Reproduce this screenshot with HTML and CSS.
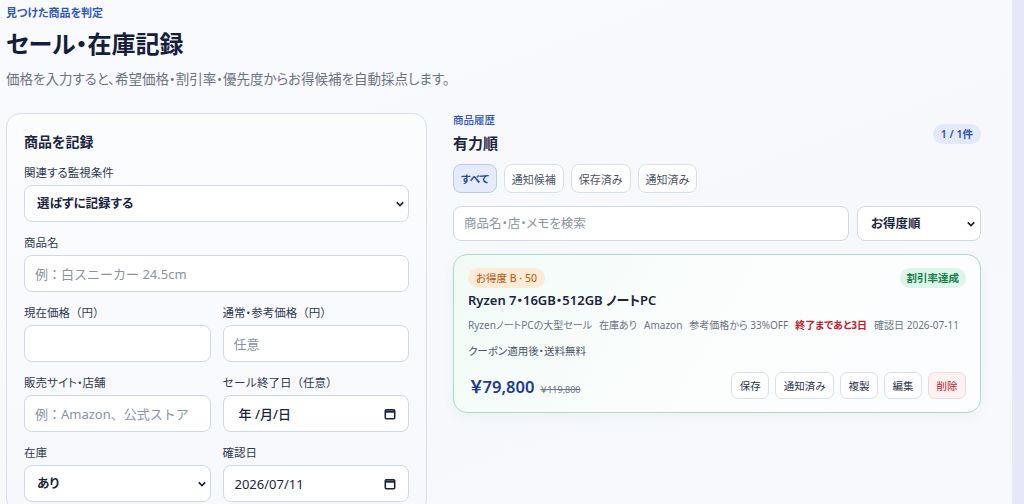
FILE: index.html
```html
<!DOCTYPE html>
<html lang="ja">
<head>
  <meta charset="UTF-8" />
  <meta name="viewport" content="width=device-width, initial-scale=1.0" />
  <title>セール・在庫記録</title>
  <link rel="stylesheet" href="styles.css">
</head>
<body>

  <main class="page">
    <header class="page-head">
      <div class="eyebrow">見つけた商品を判定</div>
      <h1>セール・在庫記録</h1>
      <p class="lead">価格を入力すると、希望価格・割引率・優先度からお得候補を自動採点します。</p>
    </header>

    <div class="layout">
      <!-- Record form -->
      <section class="panel">
        <h2>商品を記録</h2>

        <div class="field">
          <label>関連する監視条件</label>
          <div class="select-wrap">
            <select class="control select">
              <option>選ばずに記録する</option>
            </select>
            <svg class="chev" viewBox="0 0 10 6"><path d="M1 1l4 4 4-4" /></svg>
          </div>
        </div>

        <div class="field">
          <label>商品名</label>
          <input class="control" type="text" placeholder="例：白スニーカー 24.5cm" />
        </div>

        <div class="row">
          <div class="field">
            <label class="wide">現在価格（円）</label>
            <input class="control" type="text" />
          </div>
          <div class="field">
            <label>通常・参考価格<span class="paren">（円）</span></label>
            <input class="control" type="text" placeholder="任意" />
          </div>
        </div>

        <div class="row">
          <div class="field">
            <label>販売サイト・店舗</label>
            <input class="control" type="text" placeholder="例：Amazon、公式ストア" />
          </div>
          <div class="field">
            <label class="wide">セール終了日（任意）</label>
            <div class="control date">
              <span class="date-empty">年 /月/日</span>
              <svg class="cal" viewBox="0 0 12 12"><rect x="1.3" y="1.8" width="9.4" height="8.9" rx="1" /><path d="M1.3 3.6h9.4" /></svg>
            </div>
          </div>
        </div>

        <div class="row">
          <div class="field">
            <label>在庫</label>
            <div class="select-wrap">
              <select class="control select">
                <option>あり</option>
              </select>
              <svg class="chev" viewBox="0 0 10 6"><path d="M1 1l4 4 4-4" /></svg>
            </div>
          </div>
          <div class="field">
            <label>確認日</label>
            <div class="control date">
              <span>2026/07/11</span>
              <svg class="cal" viewBox="0 0 12 12"><rect x="1.3" y="1.8" width="9.4" height="8.9" rx="1" /><path d="M1.3 3.6h9.4" /></svg>
            </div>
          </div>
        </div>
      </section>

      <!-- History list -->
      <section class="history">
        <div class="history-head">
          <div>
            <div class="eyebrow">商品履歴</div>
            <h2>有力順</h2>
          </div>
          <span class="count">1 / 1件</span>
        </div>

        <div class="chips">
          <button class="chip active">すべて</button>
          <button class="chip">通知候補</button>
          <button class="chip">保存済み</button>
          <button class="chip">通知済み</button>
        </div>

        <div class="search-row">
          <input class="control search" type="text" placeholder="商品名・店・メモを検索" />
          <div class="select-wrap sort">
            <select class="control select">
              <option>お得度順</option>
            </select>
            <svg class="chev" viewBox="0 0 10 6"><path d="M1 1l4 4 4-4" /></svg>
          </div>
        </div>

        <article class="item">
          <div class="item-top">
            <span class="tag deal">お得度 B · 50</span>
            <span class="tag ok">割引率達成</span>
          </div>
          <h3>Ryzen 7・16GB・512GB ノートPC</h3>
          <div class="meta">
            <span>RyzenノートPCの大型セール</span>
            <span>在庫あり</span>
            <span>Amazon</span>
            <span>参考価格から 33%OFF</span>
            <span class="urgent">終了まであと3日</span>
            <span>確認日 2026-07-11</span>
          </div>
          <div class="note">クーポン適用後・送料無料</div>
          <div class="item-foot">
            <div class="price">
              <strong>￥79,800</strong>
              <s>￥119,800</s>
            </div>
            <div class="actions">
              <button class="btn">保存</button>
              <button class="btn">通知済み</button>
              <button class="btn">複製</button>
              <button class="btn">編集</button>
              <button class="btn danger">削除</button>
            </div>
          </div>
        </article>
      </section>
    </div>
  </main>

  <div class="rail"></div>

</body>
</html>
```

FILE: styles.css
```css
* {
  margin: 0;
  padding: 0;
  box-sizing: border-box;
}

body {
  font-family: "Noto Sans", "Noto Sans CJK JP", sans-serif;
  font-feature-settings: "palt";
  color: #1c2740;
  display: flex;
  height: 100vh;
  overflow: hidden;
  background: #e8eaf8;
}

button,
select {
  font-feature-settings: "palt";
}

.page {
  width: 1012px;
  flex: none;
  overflow: hidden;
  padding: 5px 31px 0 6px;
  background: linear-gradient(160deg, #f9fafd 0%, #f6f8fc 60%, #f8f9fd 100%);
}

.rail {
  flex: 1;
  background: #e6e8f8;
}

.eyebrow {
  font-size: 11px;
  line-height: 16px;
  font-weight: 700;
  color: #2d55c6;
}

.page-head h1 {
  margin-top: 6px;
  font-size: 24px;
  line-height: 34px;
  font-weight: 700;
  color: #14203a;
}

.lead {
  margin-top: 8px;
  font-size: 13.5px;
  line-height: 20px;
  color: #6b7385;
}

.layout {
  display: grid;
  grid-template-columns: 421px minmax(0, 1fr);
  gap: 26px;
  margin-top: 24px;
}

/* form panel */

.panel {
  height: 400px;
  border: 1px solid #d6dfee;
  border-radius: 14px;
  padding: 18px 17px 0;
  background: linear-gradient(180deg, #fbfcfe, #f6f8fc);
}

.panel h2 {
  font-size: 14px;
  line-height: 20px;
  font-weight: 700;
  color: #1b2540;
  margin-bottom: 14px;
}

.field {
  display: flex;
  flex-direction: column;
  margin-bottom: 14px;
  min-width: 0;
}

.field label {
  font-size: 11.5px;
  line-height: 14px;
  color: #2f3a52;
  margin-bottom: 5px;
}

.field label.wide,
.field label .paren {
  font-feature-settings: normal;
}

.row {
  display: grid;
  grid-template-columns: 1fr 1fr;
  gap: 12px;
}

.control {
  height: 37px;
  width: 100%;
  border: 1px solid #cfd8e8;
  border-radius: 8px;
  background: #fff;
  font-family: inherit;
  font-size: 13px;
  color: #1b2540;
  padding: 0 10px;
  outline: none;
}

.control::placeholder {
  color: #8a93a5;
}

.select-wrap {
  position: relative;
}

.select {
  appearance: none;
  padding-left: 12px;
  font-size: 12.5px;
  font-weight: 600;
}

.chev {
  position: absolute;
  right: 5px;
  top: 50%;
  width: 8px;
  height: 6px;
  margin-top: -3px;
  fill: none;
  stroke: #1b2540;
  stroke-width: 2.2;
}

.date {
  display: flex;
  align-items: center;
  justify-content: space-between;
  padding: 0 12px 0 11px;
}

.date-empty {
  padding-left: 4px;
  font-weight: 500;
}

.cal {
  width: 12px;
  height: 12px;
  fill: none;
  stroke: #1b2540;
  stroke-width: 1.6;
}

.cal path {
  stroke-width: 2.2;
}

/* history column */

.history-head {
  display: flex;
  justify-content: space-between;
  align-items: center;
}

.history-head .eyebrow {
  font-size: 10.5px;
  line-height: 14px;
  font-weight: 500;
}

.history-head h2 {
  margin-top: 5px;
  font-size: 15px;
  line-height: 22px;
  font-weight: 700;
  color: #1b2540;
}

.count {
  background: #e2e9fb;
  color: #2d4fa8;
  font-size: 10.5px;
  font-weight: 600;
  line-height: 20px;
  padding: 0 8px;
  border-radius: 10px;
}

.chips {
  display: flex;
  gap: 7px;
  margin-top: 10px;
}

.chip {
  height: 29px;
  padding: 0 7px;
  font-family: inherit;
  font-size: 11px;
  color: #4a5568;
  background: #fff;
  border: 1px solid #d8e0ec;
  border-radius: 8px;
}

.chip.active {
  background: #e4ecfb;
  border-color: #b9caec;
  color: #2848a6;
  font-size: 10.5px;
  font-weight: 600;
}

.search-row {
  display: flex;
  gap: 8px;
  margin-top: 13px;
}

.search {
  flex: 1;
  height: 35px;
  padding: 0 10px;
  font-size: 12.5px;
  font-feature-settings: "palt";
}

.sort {
  width: 124px;
}

.sort .control {
  height: 35px;
  padding-left: 13px;
}

.sort .chev {
  right: 6px;
}

/* item card */

.item {
  margin-top: 13px;
  border: 1px solid #a9dcc5;
  border-radius: 14px;
  padding: 13px 14px 13px;
  background: linear-gradient(120deg, #f1fbf6 0%, #fbfdfd 45%, #fcfdfe 100%);
  box-shadow: 0 4px 12px rgba(60, 120, 100, 0.06);
}

.item-top {
  display: flex;
  justify-content: space-between;
}

.tag {
  font-size: 10.5px;
  line-height: 20px;
  padding: 0 8px;
  border-radius: 10px;
}

.tag.deal {
  background: #fdebd5;
  color: #b5560c;
}

.tag.ok {
  background: #dcf5e8;
  color: #17804a;
  font-weight: 600;
  padding: 0 7px;
}

.item h3 {
  margin-top: 2px;
  font-size: 13px;
  line-height: 20px;
  font-weight: 600;
  color: #1b2540;
}

.meta {
  display: flex;
  gap: 7px;
  margin-top: 7px;
  font-size: 10px;
  line-height: 16px;
  color: #6b7385;
  white-space: nowrap;
}

.meta .urgent {
  color: #c2202a;
  font-weight: 700;
}

.note {
  margin-top: 10px;
  font-size: 10.5px;
  line-height: 16px;
  color: #4b5568;
}

.item-foot {
  display: flex;
  justify-content: space-between;
  align-items: flex-end;
  margin-top: 13px;
}

.price {
  display: flex;
  align-items: baseline;
  gap: 6px;
  padding-left: 2px;
}

.price strong {
  font-size: 16.5px;
  line-height: 24px;
  font-weight: 600;
  color: #1d3a94;
}

.price s {
  font-size: 9px;
  color: #6b7385;
}

.actions {
  display: flex;
  gap: 6px;
}

.btn {
  height: 27px;
  padding: 0 7.5px;
  font-family: inherit;
  font-size: 10.5px;
  color: #2a3550;
  background: #fff;
  border: 1px solid #d8e0ec;
  border-radius: 7px;
}

.btn.danger {
  background: #fdf1f1;
  border-color: #f1d9d9;
  color: #c2202a;
}
```
